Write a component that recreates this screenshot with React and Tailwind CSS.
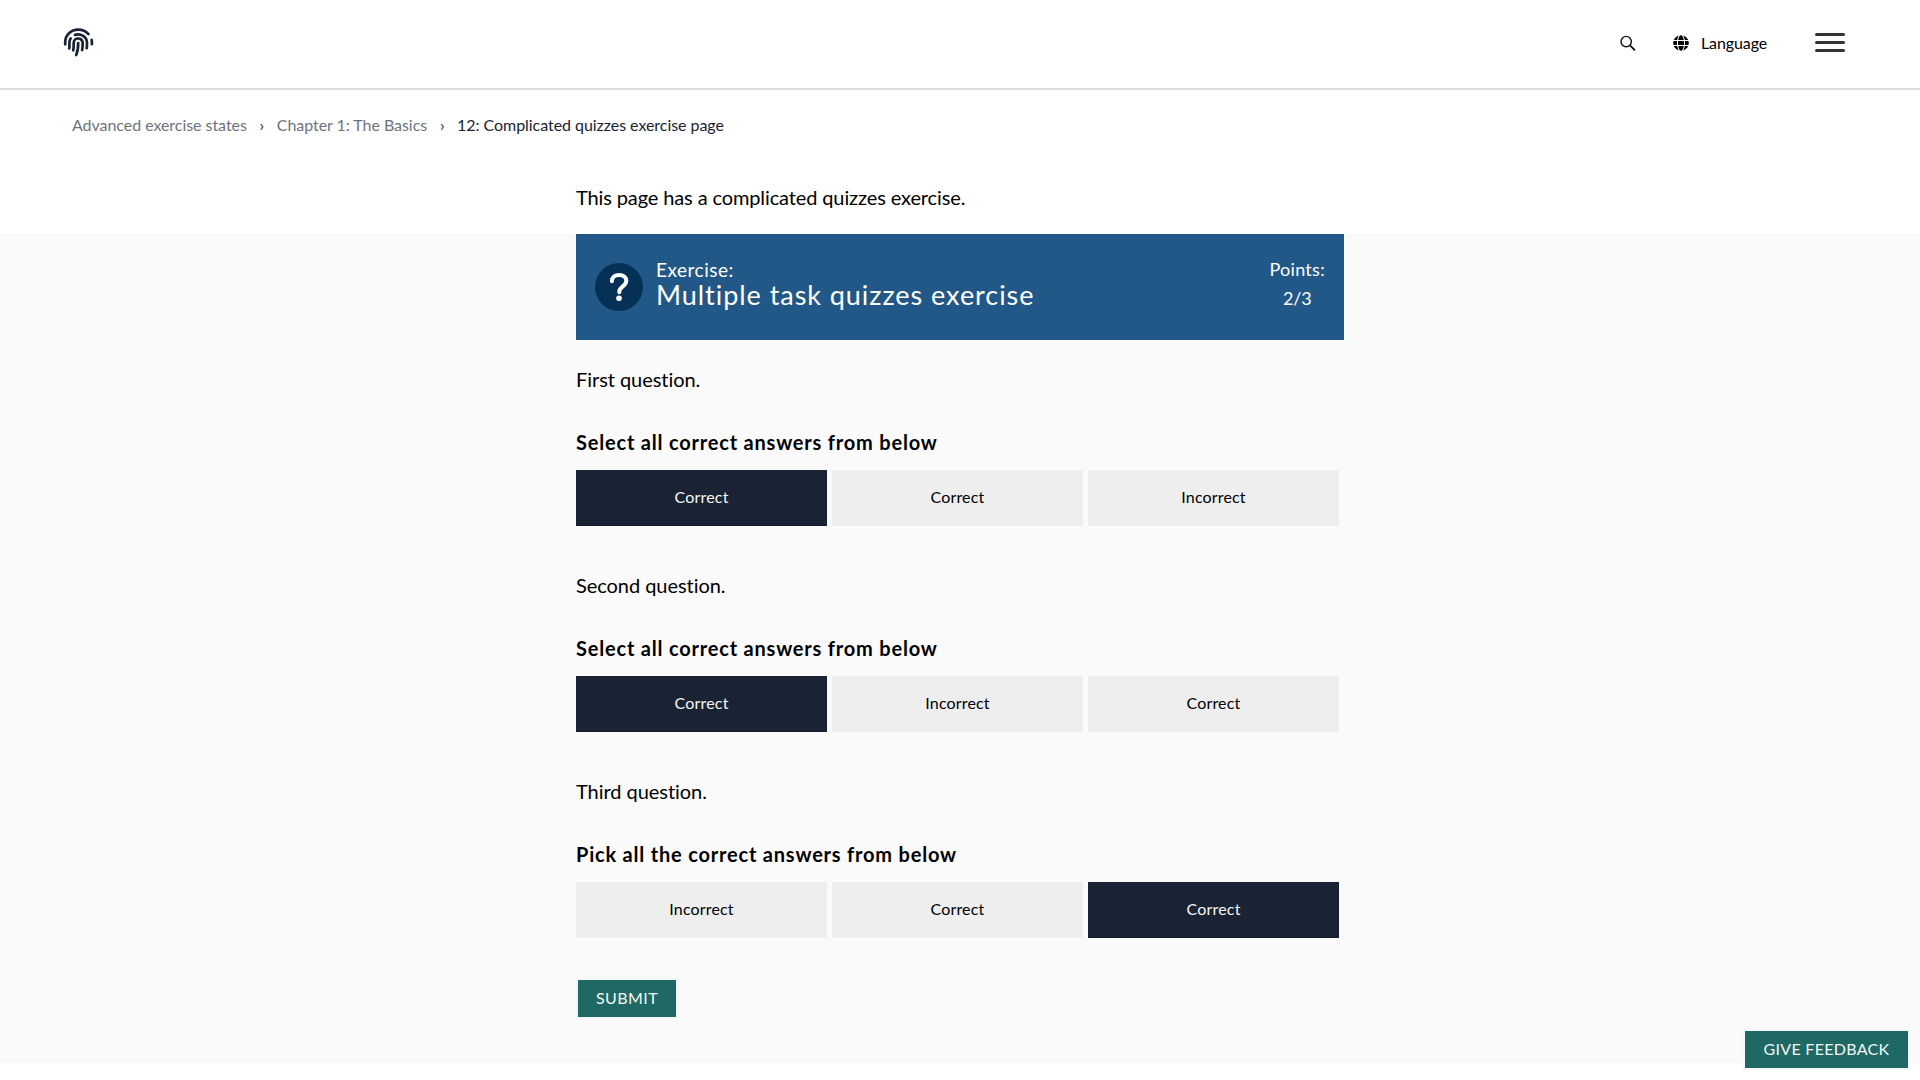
import React from "react";
import { FaGlobe } from "react-icons/fa";

function Logo() {
  return (
    <svg className="ml-[62px] h-8 w-8" viewBox="0 0 32 32" fill="none" stroke="#1a2333" strokeWidth="2.7" strokeLinecap="round">
      <path d="M3.2 17.300v-2.200C3.2 7.900 9 2.600 16.300 2.600c4 0 7.600 1.700 10.200 4.500" />
      <path d="M29.600 12.800c.5 1.600.5 2.700.2 4.400" />
      <path d="M7.200 21.500c.4-2 .2-3.800.2-6 0-1.500.5-2.900 1.200-4" />
      <path d="M13 7.900c5.800-2 12 2 12 8 0 2 0 3.500-.3 5.300" />
      <path d="M11.200 23.300c.6-2.400.5-4.800.5-7.300 0-6 9-6 9 0 0 2.700-.1 4.500-.6 7.100" />
      <path d="M16.200 16c0 4.500-.4 8.300-2 12" />
    </svg>
  );
}

function Option({ label, selected }) {
  return (
    <button
      className={
        selected
          ? "h-14 w-[251px] border-b border-[#141c2a] bg-[#1a2333] pb-[2px] text-base tracking-[0.2px] text-[#f5f6f7]"
          : "h-14 w-[251px] bg-[#eeeeee] pb-[2px] text-base tracking-[0.15px] text-black"
      }
    >
      {label}
    </button>
  );
}

function Question({ text, prompt, options, selected }) {
  return (
    <section className="h-[206px]">
      <p className="pt-[24px] text-xl leading-[30px] tracking-[-0.05px] text-black">{text}</p>
      <h2 className="mt-[34px] h-[28px] whitespace-nowrap text-xl leading-[29px] font-bold tracking-[0.8px] text-black">{prompt}</h2>
      <div className="mt-[14px] flex gap-[5px]">
        {options.map((o, i) => (
          <Option key={i} label={o} selected={i === selected} />
        ))}
      </div>
    </section>
  );
}

export default function App() {
  return (
    <div className="relative h-[1080px] overflow-hidden bg-white font-['Lato',sans-serif] [font-variant-ligatures:none]">
      <header className="flex h-[90px] items-center border-b-2 border-[#dcdcdc] pb-[3px]">
        <Logo />
        <div className="ml-auto flex items-center">
          <svg className="mt-[1px] h-4 w-4" viewBox="0 0 16 16" fill="none" stroke="#111" strokeWidth="1.4">
            <circle cx="6.200" cy="6.600" r="5.200" />
            <path d="M10 10.400L15 15.400" strokeWidth="1.8" />
          </svg>
          <FaGlobe className="ml-[37px] h-4 w-4 text-black" />
          <span className="ml-[12px] w-[66px] text-base leading-6 tracking-[-0.1px] text-black">Language</span>
          <div className="mr-[75px] ml-12 flex w-[30px] flex-col gap-[5px] pb-px">
            <span className="h-[3px] rounded-full bg-[#333]" />
            <span className="h-[3px] rounded-full bg-[#333]" />
            <span className="h-[3px] rounded-full bg-[#333]" />
          </div>
        </div>
      </header>
      <nav className="flex h-[72px] items-start pt-[23px] pl-[72px] text-base leading-6 tracking-[-0.05px] text-[#6d737d]">
        <span>Advanced exercise states</span>
        <span className="w-[30px] text-center text-[#1a2333]">›</span>
        <span>Chapter 1: The Basics</span>
        <span className="w-[30px] text-center text-[#1a2333]">›</span>
        <span className="text-[#1a2333]">12: Complicated quizzes exercise page</span>
      </nav>
      <p className="mx-auto h-[72px] w-[768px] pt-[20px] text-xl leading-[30px] tracking-[-0.12px] text-black">
        This page has a complicated quizzes exercise.
      </p>
      <main className="h-[829px] bg-[#fafafa]">
        <div className="mx-auto w-[768px]">
          <div className="flex h-[106px] items-center bg-[#215887] pr-[19px] pl-[19px] text-white">
            <svg className="h-12 w-12" viewBox="0 0 48 48" fill="none">
              <circle cx="24" cy="24" r="24" fill="#063157" />
              <path d="M16.900 18.200c0-4.100 3-6.200 7.200-6.200s7.200 2.300 7.200 6c0 5-7 5.800-7 10.600v.6" stroke="#fff" strokeWidth="4" strokeLinecap="round" />
              <circle cx="24" cy="35.300" r="2.800" fill="#fff" />
            </svg>
            <div className="ml-[13px] flex flex-col pb-[7px]">
              <span className="text-[19px] leading-[24px] tracking-[0.5px]">Exercise:</span>
              <span className="-mt-px text-[27px] leading-[28px] tracking-[0.95px] whitespace-nowrap">Multiple task quizzes exercise</span>
            </div>
            <div className="ml-auto flex flex-col items-center pb-[6px] text-[18px] leading-[29px]">
              <span className="tracking-[0.3px]">Points:</span>
              <span className="tracking-[-0.2px]">2/3</span>
            </div>
          </div>
          <Question text="First question." prompt="Select all correct answers from below" options={["Correct", "Correct", "Incorrect"]} selected={0} />
          <Question text="Second question." prompt="Select all correct answers from below" options={["Correct", "Incorrect", "Correct"]} selected={0} />
          <Question text="Third question." prompt="Pick all the correct answers from below" options={["Incorrect", "Correct", "Correct"]} selected={2} />
          <button className="mt-5 h-[41px] w-[102px] border-2 border-[#f5f6f7] bg-[#1f6964] pb-[2px] text-base tracking-[0.4px] text-[#f5f6f7]">SUBMIT</button>
        </div>
      </main>
      <button className="absolute right-[10px] bottom-[10px] h-[41px] w-[167px] border-2 border-[#f5f6f7] bg-[#1f6964] pb-[2px] text-base tracking-[0.3px] text-[#f5f6f7]">
        GIVE FEEDBACK
      </button>
    </div>
  );
}
